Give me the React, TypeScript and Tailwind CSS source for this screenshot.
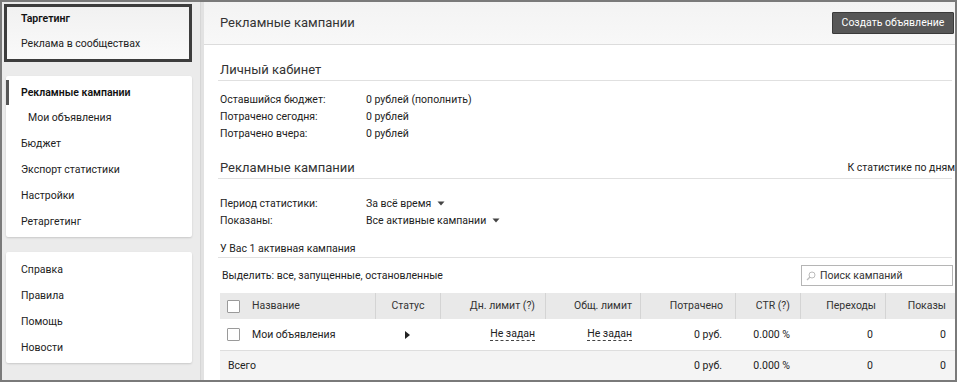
import React from "react";

const font = { fontFamily: "Roboto, 'Liberation Sans', sans-serif" };

function Checkbox() {
  return <div className="w-[13px] h-[13px] border border-[#9a9a9a] bg-white rounded-[1px]" />;
}

function Caret() {
  return (
    <svg width="8" height="5" viewBox="0 0 8 5" className="ml-[6px] inline-block">
      <path d="M0.5 0.5 L7.5 0.5 L4 4.5 Z" fill="#444" />
    </svg>
  );
}

export default function App() {
  return (
    <div className="w-[959px] h-[383px] bg-white" style={font}>
      <div className="w-[957px] h-[382px] border-2 border-[#7a7a7a] flex overflow-hidden text-[#222]">
        {/* Sidebar */}
        <div className="w-[198px] shrink-0 bg-[#ebebeb] flex flex-col">
          <div className="mt-[2px] ml-[2px] w-[188px] h-[58px] border-[3px] border-[#3d3d3d] bg-gradient-to-b from-[#f1f1f1] to-[#fafafa] flex flex-col pl-[14px] text-[10.5px]">
            <div className="h-[24px] flex items-center font-semibold text-[#111]">Таргетинг</div>
            <div className="h-[26px] flex items-center text-[#222]">Реклама в сообществах</div>
          </div>
          <div className="mt-[14px] ml-[4px] w-[186px] h-[161px] bg-white shadow-[0_1px_2px_rgba(0,0,0,0.15)] rounded-[2px] pt-[4px] text-[10.5px]">
            <div className="h-[25px] flex items-center border-l-[3px] border-[#555] pl-[12px] font-semibold text-[#111]">Рекламные кампании</div>
            <div className="h-[26px] flex items-center pl-[22px]">Мои объявления</div>
            <div className="h-[26px] flex items-center pl-[15px]">Бюджет</div>
            <div className="h-[26px] flex items-center pl-[15px]">Экспорт статистики</div>
            <div className="h-[26px] flex items-center pl-[15px]">Настройки</div>
            <div className="h-[25px] flex items-center pl-[15px]">Ретаргетинг</div>
          </div>
          <div className="mt-[15px] ml-[4px] w-[186px] h-[111px] bg-white shadow-[0_1px_2px_rgba(0,0,0,0.15)] rounded-[2px] pt-[5px] text-[10.5px]">
            <div className="h-[26px] flex items-center pl-[15px]">Справка</div>
            <div className="h-[26px] flex items-center pl-[15px]">Правила</div>
            <div className="h-[26px] flex items-center pl-[15px]">Помощь</div>
            <div className="h-[26px] flex items-center pl-[15px]">Новости</div>
          </div>
        </div>
        {/* divider */}
        <div className="w-[4px] shrink-0 bg-[#e2e2e2] border-l border-[#d6d6d6]" />
        {/* Main */}
        <div className="flex-1 min-w-0 bg-white flex flex-col">
          <div className="h-[43px] shrink-0 bg-gradient-to-b from-[#f3f3f3] to-[#f8f8f8] border-b border-[#dcdcdc] flex items-center justify-between pl-[16px] pr-[1px]">
            <div className="text-[13px] text-[#333]">Рекламные кампании</div>
            <div className="h-[22px] w-[122px] bg-[#575757] border border-[#3a3a3a] text-white text-[10.5px] flex items-center justify-center rounded-[1px]">Создать объявление</div>
          </div>
          <div className="pl-[14px] pr-[3px]">
            <div className="mt-[15px] h-[21px] border-b border-[#e0e0e0] flex items-center pl-[2px] text-[13px] text-[#333]">Личный кабинет</div>
            <div className="mt-[10px] pl-[2px] text-[10.5px] text-[#222]">
              <div className="h-[17px] flex items-center"><span className="w-[146px]">Оставшийся бюджет:</span><span>0 рублей (пополнить)</span></div>
              <div className="h-[17px] flex items-center"><span className="w-[146px]">Потрачено сегодня:</span><span>0 рублей</span></div>
              <div className="h-[17px] flex items-center"><span className="w-[146px]">Потрачено вчера:</span><span>0 рублей</span></div>
            </div>
            <div className="mt-[16px] h-[21px] border-b border-[#e0e0e0] flex items-center justify-between pl-[2px] text-[#333]">
              <span className="text-[13px]">Рекламные кампании</span>
              <span className="text-[10.5px] text-[#222] whitespace-nowrap -mr-[3px]">К статистике по дням</span>
            </div>
            <div className="mt-[16px] pl-[2px] text-[10.5px] text-[#222]">
              <div className="h-[17px] flex items-center"><span className="w-[146px]">Период статистики:</span><span className="flex items-center">За всё время<Caret /></span></div>
              <div className="h-[17px] flex items-center"><span className="w-[146px]">Показаны:</span><span className="flex items-center">Все активные кампании<Caret /></span></div>
            </div>
            <div className="mt-[12px] h-[17px] border-b border-[#e0e0e0] flex items-center pl-[2px] text-[10.5px] text-[#222]">У Вас 1 активная кампания</div>
            <div className="mt-[7px] h-[21px] flex items-center justify-between pl-[4px] text-[10.5px] text-[#222]">
              <span>Выделить: все, запущенные, остановленные</span>
              <div className="w-[152px] h-[21px] border border-[#b5b5b5] flex items-center pl-[4px] mr-[-1px]">
                <svg width="10" height="10" viewBox="0 0 10 10" className="mr-[4px]">
                  <circle cx="6" cy="4" r="3" fill="none" stroke="#bbb" strokeWidth="1" />
                  <path d="M4 6 L1 9" stroke="#bbb" strokeWidth="1.2" />
                </svg>
                <span className="text-[10.5px] text-[#333]">Поиск кампаний</span>
              </div>
            </div>
          </div>
          <div className="mt-[7px] ml-[16px] w-[740px] text-[10.5px] text-[#222]">
            <div className="h-[26px] bg-[#e9e9e9] flex items-stretch text-[#333]">
              <div className="w-[25px] flex items-center justify-center pl-[2px]"><Checkbox /></div>
              <div className="w-[130px] flex items-center pl-[7px]">Название</div>
              <div className="w-[65px] flex items-center justify-center border-l border-[#d4d4d4]">Статус</div>
              <div className="w-[105px] flex items-center justify-end pr-[10px] border-l border-[#d4d4d4]">Дн. лимит (?)</div>
              <div className="w-[95px] flex items-center justify-end pr-[8px] border-l border-[#d4d4d4]">Общ. лимит</div>
              <div className="w-[95px] flex items-center justify-end pr-[12px] border-l border-[#d4d4d4]">Потрачено</div>
              <div className="w-[65px] flex items-center justify-end pr-[10px] border-l border-[#d4d4d4]">CTR (?)</div>
              <div className="w-[85px] flex items-center justify-end pr-[9px] border-l border-[#d4d4d4]">Переходы</div>
              <div className="w-[75px] flex items-center justify-end pr-[14px] border-l border-[#d4d4d4]">Показы</div>
            </div>
            <div className="h-[32px] bg-white border-b border-[#dedede] flex items-stretch">
              <div className="w-[25px] flex items-center justify-center pl-[2px]"><Checkbox /></div>
              <div className="w-[130px] flex items-center pl-[7px]">Мои объявления</div>
              <div className="w-[65px] flex items-center justify-center">
                <svg width="5" height="8" viewBox="0 0 5 8"><path d="M0 0 L5 4 L0 8 Z" fill="#222" /></svg>
              </div>
              <div className="w-[105px] flex items-center justify-end pr-[10px]"><span className="border-b border-dashed border-[#444] leading-[12px]">Не задан</span></div>
              <div className="w-[95px] flex items-center justify-end pr-[8px]"><span className="border-b border-dashed border-[#444] leading-[12px]">Не задан</span></div>
              <div className="w-[95px] flex items-center justify-end pr-[13px]">0 руб.</div>
              <div className="w-[65px] flex items-center justify-end pr-[10px]">0.000 %</div>
              <div className="w-[85px] flex items-center justify-end pr-[12px]">0</div>
              <div className="w-[75px] flex items-center justify-end pr-[14px]">0</div>
            </div>
            <div className="h-[30px] bg-[#f4f4f4] flex items-stretch">
              <div className="w-[155px] flex items-center pl-[8px]">Всего</div>
              <div className="w-[65px]" />
              <div className="w-[105px]" />
              <div className="w-[95px]" />
              <div className="w-[95px] flex items-center justify-end pr-[13px]">0 руб.</div>
              <div className="w-[65px] flex items-center justify-end pr-[10px]">0.000 %</div>
              <div className="w-[85px] flex items-center justify-end pr-[12px]">0</div>
              <div className="w-[75px] flex items-center justify-end pr-[14px]">0</div>
            </div>
          </div>
        </div>
      </div>
    </div>
  );
}
